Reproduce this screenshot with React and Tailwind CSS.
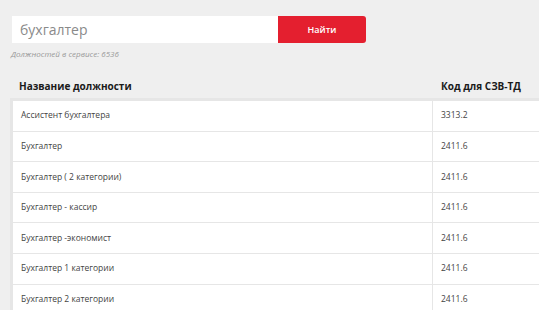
const rows = [
    ["Ассистент бухгалтера", "3313.2"],
    ["Бухгалтер", "2411.6"],
    ["Бухгалтер ( 2 категории)", "2411.6"],
    ["Бухгалтер - кассир", "2411.6"],
    ["Бухгалтер -экономист", "2411.6"],
    ["Бухгалтер 1 категории", "2411.6"],
    ["Бухгалтер 2 категории", "2411.6"],
];

export default function App() {
    return (
        <div
            className="w-[539px] h-[310px] overflow-hidden bg-[#efefef] pt-4"
            style={{ fontFamily: "'Open Sans', 'Noto Sans', sans-serif" }}
        >
            <div className="flex ml-3 h-[27px]">
                <div className="w-[266px] bg-white flex items-center pl-2 text-[14px] text-[#8a8a8a]">
                    бухгалтер
                </div>
                <button className="w-[88px] bg-[#e41f2f] rounded-r-[3px] text-white text-[9px] font-semibold">
                    Найти
                </button>
            </div>
            <p className="ml-[11px] mt-[6px] text-[8px] italic text-[#999] leading-[10px]">
                Должностей в сервисе: 6536
            </p>

            <div className="ml-[10px] mt-[16px] flex h-[23px] items-center text-[10px] font-bold text-[#1a1a1a]">
                <div className="w-[423px] pl-[9px]">Название должности</div>
                <div className="pl-[8px]">Код для СЗВ-ТД</div>
            </div>

            <div className="ml-[10px] border-l-[3px] border-t-[3px] border-[#e6e6e6] bg-white">
                {rows.map(([name, code]) => (
                    <div
                        key={name}
                        className="flex h-[30.6px] border-b border-[#e6e6e6] text-[8.5px] text-[#444]"
                    >
                        <div className="w-[420px] pl-2 flex items-center border-r border-[#e6e6e6]">{name}</div>
                        <div className="pl-2 flex items-center">{code}</div>
                    </div>
                ))}
            </div>
        </div>
    );
}
